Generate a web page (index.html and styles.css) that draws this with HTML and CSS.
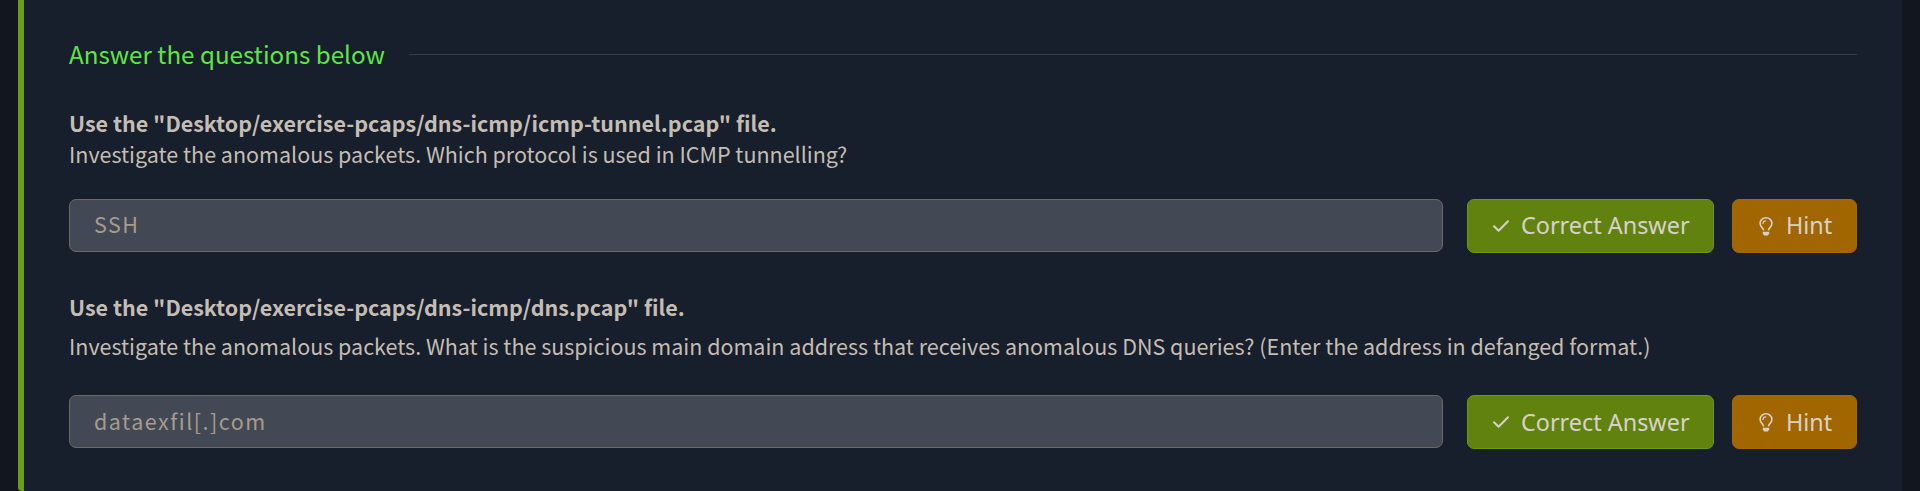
FILE: index.html
```
<!DOCTYPE html>
<html lang="en">
<head>
<meta charset="utf-8">
<title>Answer the questions below</title>
<link rel="stylesheet" href="styles.css">
</head>
<body>
<svg class="symbols" aria-hidden="true">
  <symbol id="check" viewBox="0 0 18 16"><path d="M2 8.2 6.6 12.7 16 3.2" fill="none" stroke="currentColor" stroke-width="2" stroke-linecap="round" stroke-linejoin="round"/></symbol>
  <symbol id="bulb" viewBox="0 0 14 19"><path d="M4.6 13.4C4.3 11 1.1 9.6 1.1 6.4a5.9 5.6 0 0 1 11.8 0C12.9 9.6 9.7 11 9.4 13.4" fill="none" stroke="currentColor" stroke-width="1.6"/><path d="M4 6.6C4 4.9 5.2 4 6.7 3.9" fill="none" stroke="currentColor" stroke-width="1.2" stroke-linecap="round"/><path d="M3.8 14.8h6.4v1.4L9 18.4H5l-1.2-2.2z" fill="currentColor"/></symbol>
</svg>
<main class="card">
  <header class="heading"><h1 class="title">Answer the questions below</h1><span class="rule"></span></header>
  <section class="question">
    <p class="text"><strong>Use the "Desktop/exercise-pcaps/dns-icmp/icmp-tunnel.pcap" file.</strong></p>
    <p class="text">Investigate the anomalous packets. Which protocol is used in ICMP tunnelling?</p>
    <div class="row">
      <div class="answer">SSH</div>
      <button class="button correct"><svg class="check"><use href="#check"/></svg><span>Correct Answer</span></button>
      <button class="button hint"><svg class="bulb"><use href="#bulb"/></svg><span>Hint</span></button>
    </div>
  </section>
  <section class="question spaced">
    <p class="text"><strong>Use the "Desktop/exercise-pcaps/dns-icmp/dns.pcap" file.</strong></p>
    <p class="text">Investigate the anomalous packets. What is the suspicious main domain address that receives anomalous DNS queries? (Enter the address in defanged format.)</p>
    <div class="row">
      <div class="answer">dataexfil[.]com</div>
      <button class="button correct"><svg class="check"><use href="#check"/></svg><span>Correct Answer</span></button>
      <button class="button hint"><svg class="bulb"><use href="#bulb"/></svg><span>Hint</span></button>
    </div>
  </section>
</main>
</body>
</html>
```
FILE: styles.css
```
* { box-sizing: border-box; }
body {
  margin: 0;
  height: 491px;
  overflow: hidden;
  background: #12161f;
  color: #c4bdb3;
  font-family: "Noto Sans CJK SC", "Noto Sans", sans-serif;
}
.symbols { display: none; }
.card {
  height: 491px;
  margin: 0 18px;
  padding: 34px 45px 0;
  background: #171e2c;
  border-left: 6px solid #699e10;
  border-bottom-left-radius: 4px;
}
.heading { display: flex; align-items: center; gap: 25px; height: 40px; margin-bottom: 33px; }
.title { margin: 0; color: #5de645; font-size: 24.2px; font-weight: 400; line-height: 40px; white-space: nowrap; width: 315px; }
.rule { flex: 1; height: 1px; background: #353b47; }
.text { margin: 0; font-size: 21.49px; line-height: 31px; white-space: nowrap; }
.text strong { font-weight: 700; }
.row { display: flex; align-items: flex-start; margin-top: 30px; }
.answer {
  flex: 1;
  height: 53px;
  margin-right: 24px;
  padding: 0 24px;
  border: 1px solid #6e6860;
  border-radius: 7px;
  background: #434855;
  color: #a59c8e;
  font-size: 21.5px;
  letter-spacing: 1.5px;
  line-height: 47px;
}
.button {
  display: flex;
  align-items: center;
  height: 54px;
  padding: 0 0 0 24px;
  border: 1px solid;
  border-radius: 7px;
  color: #d7d2c9;
  font: 400 23.4px/50px "Noto Sans", sans-serif;
  white-space: nowrap;
}
.button span { padding-bottom: 2px; }
.correct { width: 247px; margin-right: 18px; background: #62820f; border-color: #679b10; }
.hint { width: 125px; padding-left: 25px; background: #a26600; border-color: #a66a03; }
.check { width: 18px; height: 16px; margin-right: 11px; }
.bulb { width: 14px; height: 19px; margin: 0 13px 0 1px; }
.spaced { padding-top: 38px; }
.spaced .text + .text { margin-top: 8px; }
.spaced .row { margin-top: 34px; }
.spaced .answer { line-height: 49px; }
.spaced .button span { padding: 1px 0; }
```
